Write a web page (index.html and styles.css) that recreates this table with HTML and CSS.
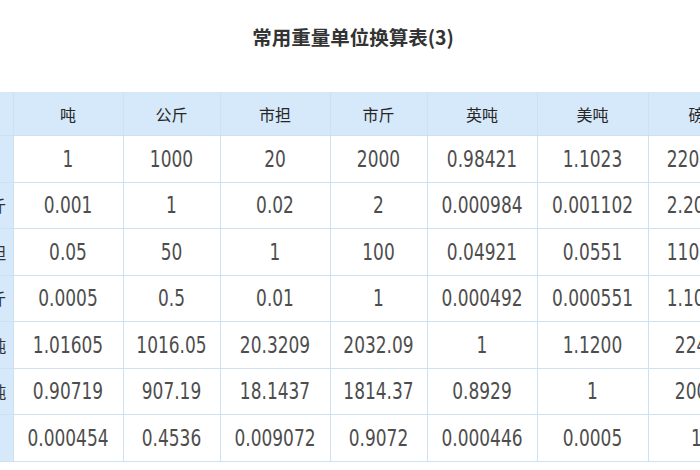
FILE: index.html
```html
<!DOCTYPE html>
<html lang="zh-CN">
<head>
<meta charset="utf-8">
<title>常用重量单位换算表(3)</title>
<link rel="stylesheet" href="styles.css">
</head>
<body>
<div class="title-wrap"><h1 class="title">常用重量单位换算表(3)</h1></div>
<div class="table-wrap">
<table class="conv">
<colgroup>
<col class="c-label"><col class="c-w"><col class="c-n"><col class="c-w"><col class="c-n"><col class="c-w"><col class="c-w2"><col class="c-n">
</colgroup>
<thead>
<tr><th class="lbl"></th><th>吨</th><th>公斤</th><th>市担</th><th>市斤</th><th>英吨</th><th>美吨</th><th>磅</th></tr>
</thead>
<tbody>
<tr><th class="lbl">吨</th><td><span class="v">1</span></td><td><span class="v">1000</span></td><td><span class="v">20</span></td><td><span class="v">2000</span></td><td><span class="v">0.98421</span></td><td><span class="v">1.1023</span></td><td><span class="v">2204.6</span></td></tr>
<tr><th class="lbl">公斤</th><td><span class="v">0.001</span></td><td><span class="v">1</span></td><td><span class="v">0.02</span></td><td><span class="v">2</span></td><td><span class="v">0.000984</span></td><td><span class="v">0.001102</span></td><td><span class="v">2.2046</span></td></tr>
<tr><th class="lbl">市担</th><td><span class="v">0.05</span></td><td><span class="v">50</span></td><td><span class="v">1</span></td><td><span class="v">100</span></td><td><span class="v">0.04921</span></td><td><span class="v">0.0551</span></td><td><span class="v">110.23</span></td></tr>
<tr><th class="lbl">市斤</th><td><span class="v">0.0005</span></td><td><span class="v">0.5</span></td><td><span class="v">0.01</span></td><td><span class="v">1</span></td><td><span class="v">0.000492</span></td><td><span class="v">0.000551</span></td><td><span class="v">1.1023</span></td></tr>
<tr><th class="lbl">英吨</th><td><span class="v">1.01605</span></td><td><span class="v">1016.05</span></td><td><span class="v">20.3209</span></td><td><span class="v">2032.09</span></td><td><span class="v">1</span></td><td><span class="v">1.1200</span></td><td><span class="v">2240</span></td></tr>
<tr><th class="lbl">美吨</th><td><span class="v">0.90719</span></td><td><span class="v">907.19</span></td><td><span class="v">18.1437</span></td><td><span class="v">1814.37</span></td><td><span class="v">0.8929</span></td><td><span class="v">1</span></td><td><span class="v">2000</span></td></tr>
<tr><th class="lbl">磅</th><td><span class="v">0.000454</span></td><td><span class="v">0.4536</span></td><td><span class="v">0.009072</span></td><td><span class="v">0.9072</span></td><td><span class="v">0.000446</span></td><td><span class="v">0.0005</span></td><td><span class="v">1</span></td></tr>
</tbody>
</table>
</div>
</body>
</html>
```

FILE: styles.css
```css
html, body {
  margin: 0;
  padding: 0;
  background: #ffffff;
  width: 700px;
  height: 470px;
  overflow: hidden;
}

.title-wrap {
  height: 92px;
  display: flex;
  justify-content: center;
  padding-top: 26px;
  box-sizing: border-box;
}

.title {
  margin: 0;
  font-family: "Noto Sans CJK SC", sans-serif;
  font-size: 19.5px;
  line-height: 22px;
  font-weight: 700;
  color: #333333;
  padding-left: 6px;
}

.table-wrap {
  margin-left: -27px;
}

.conv {
  border-collapse: collapse;
  table-layout: fixed;
  width: 772px;
}

.c-label { width: 40px; }
.c-w { width: 110px; }
.c-n { width: 97px; }
.c-w2 { width: 111px; }

.conv th,
.conv td {
  border: 1px solid #cfe1f0;
  text-align: center;
  padding: 0;
  height: 45.5px;
  overflow: hidden;
  white-space: nowrap;
}

.conv thead th {
  background: #d6e9fa;
  font-family: "Noto Sans CJK SC", sans-serif;
  font-size: 16px;
  font-weight: 400;
  color: #262626;
  border-top: none;
  height: 43px;
}

.conv th.lbl {
  background: #d6e9fa;
  font-family: "Noto Sans CJK SC", sans-serif;
  font-size: 16px;
  font-weight: 400;
  color: #333333;
  border-left: none;
  padding-right: 5px;
}

.conv td {
  font-family: "DejaVu Sans", sans-serif;
  font-size: 17px;
  color: #4d4d4d;
  background: #ffffff;
}

.v {
  display: inline-block;
  transform: scaleY(1.35);
}
```
